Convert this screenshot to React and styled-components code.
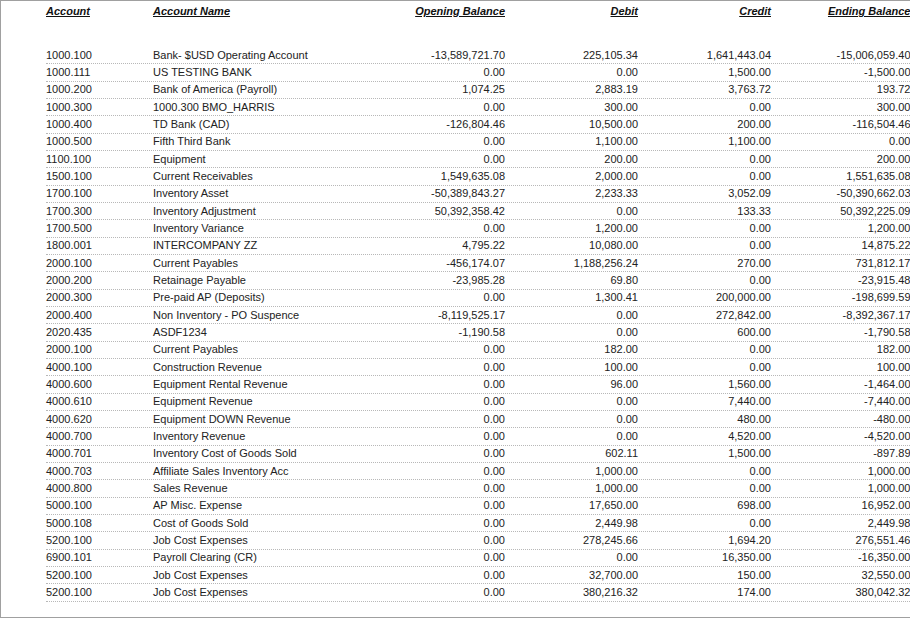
import React from "react";
import styled, { createGlobalStyle } from "styled-components";

const G = createGlobalStyle`
  html,body{margin:0;padding:0;background:#fff;}
  body{font-family:"Liberation Sans",Arial,sans-serif;color:#222;}
`;
const Frame = styled.div`
  width:910px;height:618px;box-sizing:border-box;border:1px solid #a0a0a0;border-right:none;
  overflow:hidden;background:#fff;
`;
const Inner = styled.div`
  width:866px;margin-left:45px;padding-top:4px;
`;
const cols = "107px 227px 125px 133px 133px 139.5px";
const Head = styled.div`
  display:grid;grid-template-columns:${cols};height:40px;
  font-size:11px;font-weight:bold;font-style:italic;text-decoration:underline;color:#111;
`;
const Row = styled.div`
  display:grid;grid-template-columns:${cols};height:17.33px;box-sizing:border-box;
  align-items:center;font-size:11px;border-bottom:1px dotted #b8b8b8;color:#222;
`;
const C = styled.div`
  text-align:${p => (p.$r ? "right" : "left")};white-space:nowrap;line-height:13px;
`;
const Spacer = styled.div`height:2px;`;

const data = `1000.100|Bank- $USD Operating Account|-13,589,721.70|225,105.34|1,641,443.04|-15,006,059.40
1000.111|US TESTING BANK|0.00|0.00|1,500.00|-1,500.00
1000.200|Bank of America (Payroll)|1,074.25|2,883.19|3,763.72|193.72
1000.300|1000.300 BMO_HARRIS|0.00|300.00|0.00|300.00
1000.400|TD Bank (CAD)|-126,804.46|10,500.00|200.00|-116,504.46
1000.500|Fifth Third Bank|0.00|1,100.00|1,100.00|0.00
1100.100|Equipment|0.00|200.00|0.00|200.00
1500.100|Current Receivables|1,549,635.08|2,000.00|0.00|1,551,635.08
1700.100|Inventory Asset|-50,389,843.27|2,233.33|3,052.09|-50,390,662.03
1700.300|Inventory Adjustment|50,392,358.42|0.00|133.33|50,392,225.09
1700.500|Inventory Variance|0.00|1,200.00|0.00|1,200.00
1800.001|INTERCOMPANY ZZ|4,795.22|10,080.00|0.00|14,875.22
2000.100|Current Payables|-456,174.07|1,188,256.24|270.00|731,812.17
2000.200|Retainage Payable|-23,985.28|69.80|0.00|-23,915.48
2000.300|Pre-paid AP (Deposits)|0.00|1,300.41|200,000.00|-198,699.59
2000.400|Non Inventory - PO Suspence|-8,119,525.17|0.00|272,842.00|-8,392,367.17
2020.435|ASDF1234|-1,190.58|0.00|600.00|-1,790.58
2000.100|Current Payables|0.00|182.00|0.00|182.00
4000.100|Construction Revenue|0.00|100.00|0.00|100.00
4000.600|Equipment Rental Revenue|0.00|96.00|1,560.00|-1,464.00
4000.610|Equipment Revenue|0.00|0.00|7,440.00|-7,440.00
4000.620|Equipment DOWN Revenue|0.00|0.00|480.00|-480.00
4000.700|Inventory Revenue|0.00|0.00|4,520.00|-4,520.00
4000.701|Inventory Cost of Goods Sold|0.00|602.11|1,500.00|-897.89
4000.703|Affiliate Sales Inventory Acc|0.00|1,000.00|0.00|1,000.00
4000.800|Sales Revenue|0.00|1,000.00|0.00|1,000.00
5000.100|AP Misc. Expense|0.00|17,650.00|698.00|16,952.00
5000.108|Cost of Goods Sold|0.00|2,449.98|0.00|2,449.98
5200.100|Job Cost Expenses|0.00|278,245.66|1,694.20|276,551.46
6900.101|Payroll Clearing (CR)|0.00|0.00|16,350.00|-16,350.00
5200.100|Job Cost Expenses|0.00|32,700.00|150.00|32,550.00
5200.100|Job Cost Expenses|0.00|380,216.32|174.00|380,042.32`.split("\n").map(l => l.split("|"));

export default function App() {
  return (
    <Frame>
      <G />
      <Inner>
        <Head>
          <C>Account</C><C>Account Name</C><C $r>Opening Balance</C><C $r>Debit</C><C $r>Credit</C><C $r>Ending Balance</C>
        </Head>
        <Spacer />
        {data.map((r, i) => (
          <Row key={i}>
            {r.map((v, j) => <C key={j} $r={j > 1}>{v}</C>)}
          </Row>
        ))}
      </Inner>
    </Frame>
  );
}
